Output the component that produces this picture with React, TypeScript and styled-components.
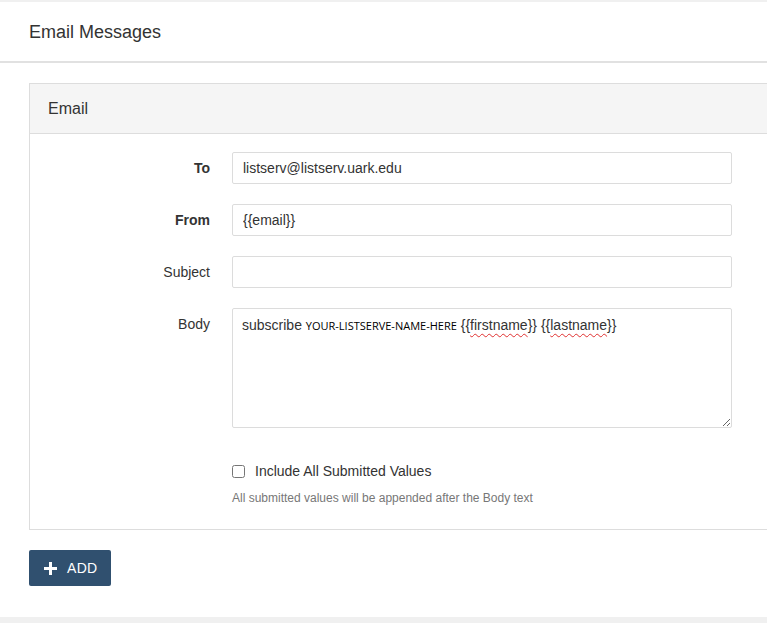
import React from "react";
import styled, { createGlobalStyle } from "styled-components";

const GlobalStyle = createGlobalStyle`
  html, body {
    margin: 0;
    padding: 0;
    background: #f0f0f0;
    font-family: "Liberation Sans", Arial, sans-serif;
    color: #333;
  }
  * { box-sizing: border-box; }
`;

const Page = styled.div`
  padding: 2px 0 7px;
`;

const Card = styled.div`
  background: #fff;
  overflow: hidden;
`;

const Header = styled.div`
  height: 61px;
  display: flex;
  align-items: center;
  padding: 1px 0 0 29px;
  font-size: 18px;
  color: #333;
  border-bottom: 2px solid #e1e1e1;
`;

const Content = styled.div`
  padding: 20px 0 31px 29px;
`;

const Panel = styled.div`
  width: 800px;
  border: 1px solid #dddddd;
  background: #fff;
`;

const PanelHeading = styled.div`
  height: 50px;
  display: flex;
  align-items: center;
  padding-left: 18px;
  font-size: 16px;
  color: #333;
  background: #f5f5f5;
  border-bottom: 1px solid #dddddd;
`;

const PanelBody = styled.div`
  padding: 18px 0 23px;
  display: grid;
  grid-template-columns: 180px 500px;
  column-gap: 22px;
  row-gap: 20px;
`;

const Label = styled.label<{ $bold?: boolean; $top?: boolean }>`
  text-align: right;
  font-size: 14px;
  line-height: 20px;
  color: #333;
  font-weight: ${(p) => (p.$bold ? 700 : 400)};
  align-self: ${(p) => (p.$top ? "start" : "center")};
  padding-top: ${(p) => (p.$top ? "6px" : "0")};
`;

const Input = styled.input`
  height: 32px;
  width: 100%;
  border: 1px solid #dcdcdc;
  border-radius: 2px;
  padding: 0 10px;
  font-family: "Liberation Sans", Arial, sans-serif;
  font-size: 14px;
  color: #333;
  outline: none;
`;

const TextArea = styled.div`
  height: 120px;
  width: 100%;
  border: 1px solid #dcdcdc;
  border-radius: 2px;
  padding: 6px 9px;
  font-size: 14px;
  line-height: 20px;
  color: #333;
  overflow: auto;
  resize: vertical;
`;

const Token = styled.span`
  font-family: "Open Sans", sans-serif;
  font-size: 11px;
  color: #000;
`;

const Misspelled = styled.span`
  text-decoration: underline wavy #e03030;
  text-decoration-thickness: 1px;
  text-underline-offset: 3px;
`;

const Spacer = styled.div``;

const Options = styled.div`
  padding-top: 13px;
`;

const CheckRow = styled.label`
  display: flex;
  align-items: center;
  height: 20px;
  font-size: 14px;
  color: #333;
`;

const Check = styled.input`
  width: 13px;
  height: 13px;
  margin: 0 10px 0 0;
`;

const Help = styled.div`
  margin-top: 9px;
  font-size: 12px;
  line-height: 16px;
  color: #777;
`;

const AddButton = styled.button`
  margin-top: 20px;
  height: 36px;
  display: inline-flex;
  align-items: center;
  gap: 10px;
  padding: 0 14px 0 15px;
  background: #30506f;
  color: #fff;
  border: none;
  border-radius: 2px;
  font-family: "Liberation Sans", Arial, sans-serif;
  font-size: 14px;
  letter-spacing: 0.3px;
  cursor: pointer;
`;

const PlusIcon = () => (
  <svg width="13" height="13" viewBox="0 0 13 13" aria-hidden="true">
    <rect x="5" y="0" width="3" height="13" fill="#fff" />
    <rect x="0" y="5" width="13" height="3" fill="#fff" />
  </svg>
);

export default function App() {
  return (
    <>
      <GlobalStyle />
      <Page>
        <Card>
          <Header>Email Messages</Header>
          <Content>
            <Panel>
              <PanelHeading>Email</PanelHeading>
              <PanelBody>
                <Label $bold>To</Label>
                <Input defaultValue="listserv@listserv.uark.edu" />
                <Label $bold>From</Label>
                <Input defaultValue="{{email}}" />
                <Label>Subject</Label>
                <Input defaultValue="" />
                <Label $top>Body</Label>
                <TextArea>
                  subscribe <Token>YOUR-LISTSERVE-NAME-HERE</Token> {"{{"}
                  <Misspelled>firstname</Misspelled>
                  {"}} {{"}
                  <Misspelled>lastname</Misspelled>
                  {"}}"}
                </TextArea>
                <Spacer />
                <Options>
                  <CheckRow>
                    <Check type="checkbox" />
                    Include All Submitted Values
                  </CheckRow>
                  <Help>All submitted values will be appended after the Body text</Help>
                </Options>
              </PanelBody>
            </Panel>
            <AddButton>
              <PlusIcon />
              ADD
            </AddButton>
          </Content>
        </Card>
      </Page>
    </>
  );
}
